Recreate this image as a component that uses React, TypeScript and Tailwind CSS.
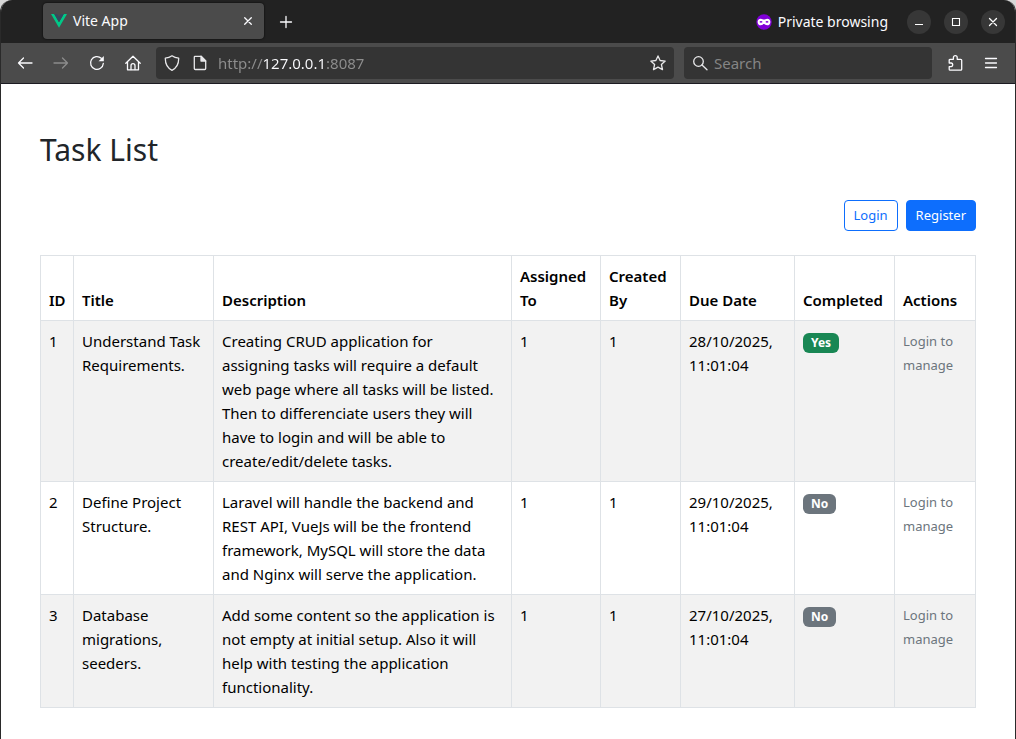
import type { ReactNode } from "react";

type Task = {
  id: number;
  title: string;
  description: string;
  assignedTo: number;
  createdBy: number;
  date: string;
  time: string;
  completed: boolean;
};

const tasks: Task[] = [
  {
    id: 1,
    title: "Understand Task Requirements.",
    description:
      "Creating CRUD application for assigning tasks will require a default web page where all tasks will be listed. Then to differenciate users they will have to login and will be able to create/edit/delete tasks.",
    assignedTo: 1,
    createdBy: 1,
    date: "28/10/2025,",
    time: "11:01:04",
    completed: true,
  },
  {
    id: 2,
    title: "Define Project Structure.",
    description:
      "Laravel will handle the backend and REST API, VueJs will be the frontend framework, MySQL will store the data and Nginx will serve the application.",
    assignedTo: 1,
    createdBy: 1,
    date: "29/10/2025,",
    time: "11:01:04",
    completed: false,
  },
  {
    id: 3,
    title: "Database migrations, seeders.",
    description:
      "Add some content so the application is not empty at initial setup. Also it will help with testing the application functionality.",
    assignedTo: 1,
    createdBy: 1,
    date: "27/10/2025,",
    time: "11:01:04",
    completed: false,
  },
];

function Icon({ children, className = "" }: { children: ReactNode; className?: string }) {
  return (
    <svg
      viewBox="0 0 16 16"
      className={`size-4 shrink-0 ${className}`}
      fill="none"
      stroke="currentColor"
      strokeWidth="1.3"
      strokeLinecap="round"
      strokeLinejoin="round"
      aria-hidden="true"
    >
      {children}
    </svg>
  );
}

function ToolButton({ label, disabled, children }: { label: string; disabled?: boolean; children: ReactNode }) {
  return (
    <button
      type="button"
      aria-label={label}
      disabled={disabled}
      className="flex size-8 shrink-0 items-center justify-center text-[#fbfbfe] disabled:text-[#8c8c8c]"
    >
      {children}
    </button>
  );
}

function WindowButton({ label, children }: { label: string; children: ReactNode }) {
  return (
    <button
      type="button"
      aria-label={label}
      className="flex size-6 shrink-0 items-center justify-center rounded-full bg-[#373737] text-white"
    >
      {children}
    </button>
  );
}

function TabBar() {
  return (
    <div className="flex h-[43px] items-center bg-[#222222] pr-2.5 pl-[42px] text-sm text-[#fbfbfe]">
      <div className="mb-px flex h-9 w-[221px] items-center gap-1.5 rounded bg-[#4b4b4b] pr-2 pl-2 shadow-[0_0_2px_#000000]">
        <svg viewBox="0 0 16 16" className="size-4 shrink-0" aria-hidden="true">
          <path d="M0 1h3.2L8 9.3 12.8 1H16L8 14.8z" fill="#00c987" />
          <path d="M3.2 1h3L8 4.1 9.8 1h3L8 9.3z" fill="#35495e" />
        </svg>
        <span className="flex-1">Vite App</span>
        <button type="button" aria-label="Close tab" className="flex size-4 items-center justify-center">
          <Icon>
            <path d="M4.7 4.7l6.6 6.6M11.3 4.7l-6.6 6.6" />
          </Icon>
        </button>
      </div>
      <button type="button" aria-label="New tab" className="ml-3.5 flex size-4 items-center justify-center">
        <Icon>
          <path d="M8 2.5v11M2.5 8h11" />
        </Icon>
      </button>
      <div className="ml-auto flex items-center gap-1.5">
        <svg viewBox="0 0 16 16" className="size-4 shrink-0" aria-hidden="true">
          <circle cx="8" cy="8" r="7.7" fill="#8000d7" />
          <path
            fillRule="evenodd"
            fill="#ffffff"
            d="M4.8 4.7c1.3 0 2.2.8 3.2.8s1.9-.8 3.2-.8c2.2 0 3.2 1.4 3.2 3.2 0 2-1.4 3.4-3.2 3.4-1.600 0-2.200-1.300-3.200-1.300s-1.600 1.300-3.200 1.300c-1.800 0-3.200-1.400-3.200-3.400 0-1.800 1-3.200 3.200-3.200zM3.400 8c.5.9 2.600.9 3.200 0-.6-1.200-2.600-1.200-3.200 0zm6 0c.6.9 2.700.9 3.200 0-.6-1.200-2.600-1.200-3.200 0z"
          />
        </svg>
        <span>Private browsing</span>
      </div>
      <div className="ml-[19px] flex gap-[13px]">
        <WindowButton label="Minimize">
          <Icon>
            <path d="M4 10.5h8" strokeLinecap="butt" strokeWidth="1" />
          </Icon>
        </WindowButton>
        <WindowButton label="Maximize">
          <Icon>
            <path d="M4.5 4.5h7v7h-7z" strokeLinejoin="miter" strokeWidth="1.1" />
          </Icon>
        </WindowButton>
        <WindowButton label="Close window">
          <Icon>
            <path d="M4.5 4.5l7 7M11.5 4.5l-7 7" />
          </Icon>
        </WindowButton>
      </div>
    </div>
  );
}

function Toolbar() {
  return (
    <div className="flex h-[41px] items-center border-b border-[#1c1b22] bg-[#4b4b4b] pr-2 pl-2 text-[15px]">
      <div className="flex gap-1">
        <ToolButton label="Back">
          <Icon>
            <path d="M15 8H1.5M6.5 3L1.5 8l5 5" />
          </Icon>
        </ToolButton>
        <ToolButton label="Forward" disabled>
          <Icon>
            <path d="M1 8h13.5M9.5 3l5 5-5 5" />
          </Icon>
        </ToolButton>
        <ToolButton label="Reload">
          <Icon>
            <path d="M14.3 8.5A6.4 6.4 0 1 1 12.3 3.3" />
            <path d="M14.8 1v5.2H9.6z" fill="currentColor" stroke="none" />
          </Icon>
        </ToolButton>
        <ToolButton label="Home">
          <Icon>
            <path d="M.8 8.2L8 1.3l7.2 6.9M2.5 7v7.8h11V7" />
            <path d="M6 14.5V10.7a2 2 0 0 1 4 0v3.8" />
          </Icon>
        </ToolButton>
      </div>
      <div className="ml-[7px] flex h-8 flex-1 items-center rounded bg-[#343434] px-2 text-[#e8e8ea]">
        <Icon>
          <path d="M8 .8c2 1.500 4.200 2.200 6.700 2.400C14.800 9 12.800 13 8 15.300 3.200 13 1.200 9 1.300 3.200 3.800 3 6 2.300 8 .8z" />
        </Icon>
        <Icon className="ml-3">
          <path d="M3 1.3h6l4.7 4.7v7.5a1 1 0 0 1-1 1H3.300a1 1 0 0 1-1-1V2a.7.7 0 0 1 .7-.7z" />
          <path d="M9 1.3V6h4.7z" fill="currentColor" />
        </Icon>
        <input
          type="text"
          aria-label="Address"
          defaultValue="http://127.0.0.1:8087"
          className="ml-2.5 min-w-0 flex-1 bg-[linear-gradient(90deg,#8e8e8e_45px,#fbfbfe_45px,#fbfbfe_107px,#8e8e8e_107px)] bg-clip-text text-transparent outline-none"
        />
        <button type="button" aria-label="Bookmark this page">
          <Icon>
            <path d="M8 .9l2.100 4.600 5.100.6-3.800 3.400 1.100 5.100L8 12.100l-4.500 2.500 1.100-5.100L.8 6.100l5.100-.6z" />
          </Icon>
        </button>
      </div>
      <div className="ml-2.5 flex h-8 w-[248px] items-center gap-1.5 rounded bg-[#343434] px-2 text-[#e8e8ea]">
        <Icon>
          <circle cx="6.5" cy="6.5" r="4.8" />
          <path d="M10 10l5 4.8" />
        </Icon>
        <input
          type="search"
          aria-label="Search"
          placeholder="Search"
          className="min-w-0 flex-1 outline-none placeholder:text-[#858585]"
        />
      </div>
      <div className="ml-[7px] flex gap-1">
        <ToolButton label="Extensions">
          <Icon>
            <path d="M3.100 4.300h3.300V2.600a1.900 1.900 0 0 1 3.800 0v1.700h3.600a.9.900 0 0 1 .9.900v9.100a.9.900 0 0 1-.9.900H3.100a.9.900 0 0 1-.9-.9v-2.600h2.100a1.900 1.900 0 0 0 0-3.700H2.200V5.200a.9.900 0 0 1 .9-.9" />
          </Icon>
        </ToolButton>
        <ToolButton label="Open menu">
          <Icon>
            <path d="M2.5 3.500h11M2.5 8h11M2.5 12.500h11" />
          </Icon>
        </ToolButton>
      </div>
    </div>
  );
}

function StatusBadge({ completed }: { completed: boolean }) {
  return (
    <span
      className={`mt-1 inline-flex h-5 items-center rounded-md px-2 align-top text-xs font-bold text-white ${
        completed ? "bg-[#198754]" : "bg-[#6c757d]"
      }`}
    >
      {completed ? "Yes" : "No"}
    </span>
  );
}

function TaskTable() {
  const cell = "border border-[#dee2e6] p-2";
  return (
    <table className="mt-6 w-full table-fixed border-collapse text-left align-top text-[15px] leading-6 text-black">
      <colgroup>
        <col className="w-[33px]" />
        <col className="w-[140px]" />
        <col />
        <col className="w-[89px]" />
        <col className="w-20" />
        <col className="w-[114px]" />
        <col className="w-[100px]" />
        <col className="w-[81px]" />
      </colgroup>
      <thead className="align-bottom">
        <tr>
          {["ID", "Title", "Description", "Assigned To", "Created By", "Due Date", "Completed", "Actions"].map((name) => (
            <th key={name} scope="col" className={`${cell} font-semibold`}>
              {name}
            </th>
          ))}
        </tr>
      </thead>
      <tbody className="align-top">
        {tasks.map((task) => (
          <tr key={task.id} className="odd:bg-[#f2f2f2]">
            <td className={cell}>{task.id}</td>
            <td className={cell}>{task.title}</td>
            <td className={cell}>{task.description}</td>
            <td className={cell}>{task.assignedTo}</td>
            <td className={cell}>{task.createdBy}</td>
            <td className={cell}>
              {task.date} {task.time}
            </td>
            <td className={cell}>
              <StatusBadge completed={task.completed} />
            </td>
            <td className={`${cell} text-[13px] leading-6 text-[#6c757d]`}>Login to manage</td>
          </tr>
        ))}
      </tbody>
    </table>
  );
}

export default function App() {
  return (
    <div className="min-h-screen bg-[#d8d8d8] font-['Noto_Sans',sans-serif]">
      <div className="flex min-h-screen flex-col overflow-hidden rounded-t-xl border-x border-[#2a2a2a] bg-white">
        <header>
          <TabBar />
          <Toolbar />
        </header>
        <main className="flex-1 px-[39px] pt-12">
          <h1 className="text-[30px] leading-9 text-[#212529]">Task List</h1>
          <div className="mt-8 flex justify-end gap-2 text-[13px]">
            <a
              href="#login"
              className="flex h-[31px] items-center rounded border border-[#0d6efd] px-[9px] text-[#0d6efd]"
            >
              Login
            </a>
            <a
              href="#register"
              className="flex h-[31px] items-center rounded border border-[#0d6efd] bg-[#0d6efd] px-[9px] text-white"
            >
              Register
            </a>
          </div>
          <TaskTable />
        </main>
      </div>
    </div>
  );
}
